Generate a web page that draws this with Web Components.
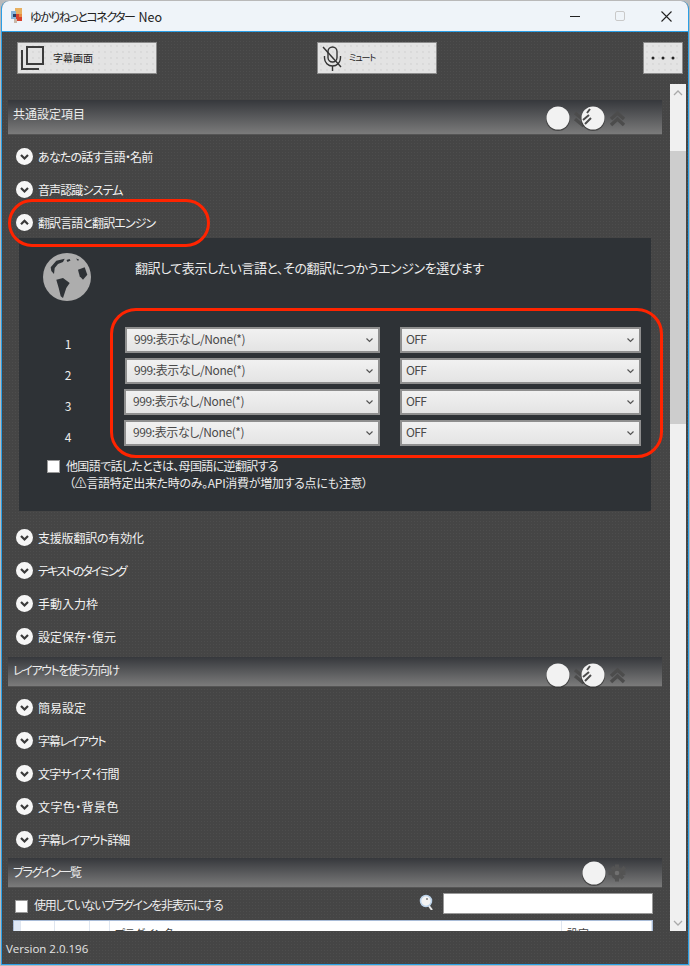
<!DOCTYPE html>
<html lang="ja">
<head>
<meta charset="utf-8">
<title>ゆかりねっとコネクター Neo</title>
<style>
  html, body { margin: 0; height: 100%; background: #b9b9b9; }
  body {
    font-family: "Noto Sans CJK JP", "Noto Sans", sans-serif;
    font-size: 12px;
    font-feature-settings: "palt";
    overflow: hidden;
  }
</style>
</head>
<body>
<app-window>
  <title-bar>ゆかりねっとコネクター <span style="letter-spacing:0;margin-left:3px;font-size:12.500px">Neo</span></title-bar>
  <tool-bar></tool-bar>
  <scroll-area>
    <section-header size="35" kind="double">共通設定項目</section-header>
    <expander-row style="margin-top:5px;letter-spacing:-.8px">あなたの話す言語・名前</expander-row>
    <expander-row style="letter-spacing:-.9px">音声認識システム</expander-row>
    <expander-row open style="letter-spacing:-.9px">翻訳言語と翻訳エンジン</expander-row>
    <translate-panel></translate-panel>
    <expander-row style="letter-spacing:-.2px">支援版翻訳の有効化</expander-row>
    <expander-row style="letter-spacing:-1.8px">テキストのタイミング</expander-row>
    <expander-row>手動入力枠</expander-row>
    <expander-row>設定保存・復元</expander-row>
    <section-header size="30" kind="double" style="margin-top:4px;letter-spacing:-1.4px;--text-top:-1px">レイアウトを使う方向け</section-header>
    <expander-row style="margin-top:4px">簡易設定</expander-row>
    <expander-row style="letter-spacing:-1.3px">字幕レイアウト</expander-row>
    <expander-row style="letter-spacing:-.75px">文字サイズ・行間</expander-row>
    <expander-row style="letter-spacing:.4px">文字色・背景色</expander-row>
    <expander-row style="letter-spacing:-1px">字幕レイアウト詳細</expander-row>
    <section-header size="30" kind="gear" style="margin-top:2px;letter-spacing:-1.4px">プラグイン一覧</section-header>
    <plugin-bar></plugin-bar>
  </scroll-area>
  <version-bar>Version 2.0.196</version-bar>
</app-window>
<red-marks></red-marks>

<script>
class AppWindow extends HTMLElement {
  constructor() {
    super();
    this.attachShadow({ mode: 'open' }).innerHTML = `
      <style>
        :host {
          display: flex;
          flex-direction: column;
          box-sizing: border-box;
          margin: 1px;
          height: 964px;
          border-radius: 8px 8px 0 0;
          overflow: hidden;
          border: solid #2a9fe6;
          border-width: 0 1px 1px 1px;
          background: radial-gradient(circle, #4d4d4d 0.7px, transparent 1px) 0 0 / 3px 3px, #454545;
        }
      </style>
      <slot></slot>`;
  }
}

class TitleBar extends HTMLElement {
  constructor() {
    super();
    this.attachShadow({ mode: 'open' }).innerHTML = `
      <style>
        :host {
          display: flex;
          align-items: center;
          flex: none;
          height: 30px;
          background: #eff4f9;
          border-bottom: 1px solid #2a9fe6;
          color: #222;
          font-size: 12px;
        }
        .logo { margin: 0 6px 0 9px; flex: none; }
        .text { flex: 1; padding-top: 1px; letter-spacing: -1.500px; }
        .ctl { height: 30px; display: flex; align-items: center; justify-content: center; }
        .ctl svg { display: block; }
      </style>
      <svg class="logo" width="13" height="16" viewBox="0 0 13 16">
        <rect x="4" y="0" width="7" height="6" fill="#e8b060"/>
        <rect x="0" y="3" width="5" height="8" fill="#86b4da"/>
        <rect x="2" y="6" width="3" height="3" fill="#2b3f66"/>
        <rect x="5" y="6" width="6" height="7" fill="#d8402c"/>
        <rect x="8" y="6" width="3" height="3" fill="#e88a40"/>
        <rect x="3" y="11" width="3" height="4" fill="#c9b8a8"/>
      </svg>
      <span class="text"><slot></slot></span>
      <div class="ctl" style="width:42px"><svg width="10" height="10"><path d="M0 5.500h10" stroke="#222" stroke-width="1"/></svg></div>
      <div class="ctl" style="width:48px"><svg width="10" height="10"><rect x=".5" y=".5" width="9" height="9" rx="1.500" fill="none" stroke="#c9c9c9"/></svg></div>
      <div class="ctl" style="width:44px"><svg width="11" height="11"><path d="M.5 .5l10 10M10.500 .5l-10 10" stroke="#222" stroke-width="1.100"/></svg></div>`;
  }
}

class ToolButton extends HTMLElement {
  constructor() {
    super();
    this.attachShadow({ mode: 'open' }).innerHTML = `
      <style>
        :host {
          display: flex;
          align-items: center;
          box-sizing: border-box;
          height: 32px;
          border: 1px solid #8b8b8b;
          background: radial-gradient(circle, #d6d6d6 0.6px, transparent 1px) 0 0 / 6px 6px, #e3e3e3;
          color: #222;
        }
      </style>
      <slot></slot>`;
  }
}

class ToolBar extends HTMLElement {
  constructor() {
    super();
    this.attachShadow({ mode: 'open' }).innerHTML = `
      <style>
        :host {
          display: flex;
          flex: none;
          box-sizing: border-box;
          height: 52px;
          padding: 10px 5px 0 15px;
        }
        .screen { width: 140px; }
        .mute { width: 120px; margin-left: 160px; }
        .more { width: 40px; margin-left: auto; justify-content: center; }
        .label { font-size: 10px; padding-bottom: 2px; }
        svg { flex: none; display: block; }
      </style>
      <tool-button class="screen">
        <svg width="35" height="30" viewBox="0 0 35 30">
          <path d="M9 4h16v17h-16z" fill="none" stroke="#3c3c3c" stroke-width="2"/>
          <path d="M4 7v19h17" fill="none" stroke="#3c3c3c" stroke-width="2"/>
        </svg>
        <span class="label">字幕画面</span>
      </tool-button>
      <tool-button class="mute">
        <svg width="31" height="30" viewBox="0 0 31 30">
          <rect x="10" y="4" width="9" height="15" rx="4.500" fill="none" stroke="#333" stroke-width="1.400"/>
          <path d="M6.500 13v2a8 8 0 0 0 16 0v-2M14.500 23v5" fill="none" stroke="#333" stroke-width="1.400"/>
          <path d="M5 4l18 20" stroke="#333" stroke-width="1.400"/>
        </svg>
        <span class="label" style="font-size:9px;letter-spacing:-1.200px">ミュート</span>
      </tool-button>
      <tool-button class="more">
        <svg width="26" height="6"><circle cx="3" cy="3" r="1.500" fill="#222"/><circle cx="13" cy="3" r="1.500" fill="#222"/><circle cx="23" cy="3" r="1.500" fill="#222"/></svg>
      </tool-button>`;
  }
}

class ScrollArea extends HTMLElement {
  constructor() {
    super();
    this.attachShadow({ mode: 'open' }).innerHTML = `
      <style>
        :host {
          display: flex;
          flex: 1;
          min-height: 0;
          overflow: hidden;
          padding-right: 2px;
        }
        .content {
          flex: 1;
          min-width: 0;
          overflow: hidden;
          padding: 16px 8px 0 6px;
          display: flex;
          flex-direction: column;
        }
        .bar {
          width: 16px;
          flex: none;
          display: flex;
          flex-direction: column;
          background: #f0f0f0;
        }
        .arrow { height: 17px; flex: none; display: flex; align-items: center; justify-content: center; }
        .thumb-top { height: 50px; flex: none; }
        .thumb { height: 273px; flex: none; background: #cdcdcd; }
        .rest { flex: 1; }
      </style>
      <div class="content"><slot></slot></div>
      <div class="bar">
        <div class="arrow"><svg width="10" height="6"><path d="M1 5l4-4 4 4" fill="none" stroke="#aaa" stroke-width="1.300"/></svg></div>
        <div class="thumb-top"></div>
        <div class="thumb"></div>
        <div class="rest"></div>
        <div class="arrow"><svg width="10" height="6"><path d="M1 1l4 4 4-4" fill="none" stroke="#aaa" stroke-width="1.300"/></svg></div>
      </div>`;
  }
}

class SectionHeader extends HTMLElement {
  constructor() {
    super();
    const size = this.getAttribute('size') || '30';
    const gear = this.getAttribute('kind') === 'gear';
    const icons = gear ? `
      <svg width="56" height="30" viewBox="0 0 56 30">
        <circle cx="16" cy="16" r="12" fill="#333" opacity=".7"/>
        <circle cx="16" cy="15" r="11.500" fill="#f2f2f2"/>
        <g fill="#545454">
          <circle cx="39" cy="15" r="6"/>
          <path d="M37 6.500h4v17h-4zM30.500 13h17v4h-17z"/>
          <path d="M32.500 10.500l2.800-2.800 11.200 11.200-2.800 2.800zM45.500 7.700l2.800 2.800-11.200 11.200-2.800-2.800z"/>
        </g>
        <circle cx="39" cy="15" r="2.300" fill="#707070"/>
      </svg>` : `
      <svg width="90" height="30" viewBox="0 0 90 30">
        <circle cx="12" cy="16" r="12" fill="#333" opacity=".7"/>
        <circle cx="12" cy="15" r="11.500" fill="#f2f2f2"/>
        <path d="M29 10l7.500 6 7.500-6M29 16l7.500 6 7.500-6" fill="none" stroke="#4c4c4c" stroke-width="3.400"/>
        <circle cx="47" cy="16" r="12" fill="#333" opacity=".7"/>
        <circle cx="47" cy="15" r="11.500" fill="#f2f2f2"/>
        <path d="M37 17l6-5M39 21l6-6M41 10l3-4" fill="none" stroke="#4c4c4c" stroke-width="2"/>
        <path d="M65 16l6.500-6 6.500 6M65 22l6.500-6 6.500 6" fill="none" stroke="#4c4c4c" stroke-width="3.400"/>
      </svg>`;
    this.attachShadow({ mode: 'open' }).innerHTML = `
      <style>
        :host {
          display: flex;
          flex: none;
          align-items: flex-start;
          height: ${size}px;
          box-sizing: border-box;
          padding: 4px 0 0 5px;
          background: linear-gradient(#36383c, #7b7b7b);
          border-bottom: 1px solid #555;
          color: #ececec;
          font-size: 12px;
        }
        .text { flex: 1; line-height: 20px; margin-top: var(--text-top, 0); }
        svg { flex: none; display: block; margin: ${gear ? -4 : -1}px ${gear ? 28 : 26}px 0 0; overflow: visible; }
      </style>
      <span class="text"><slot></slot></span>
      ${icons}`;
  }
}

class ExpanderRow extends HTMLElement {
  constructor() {
    super();
    const open = this.hasAttribute('open');
    this.attachShadow({ mode: 'open' }).innerHTML = `
      <style>
        :host {
          display: flex;
          flex: none;
          align-items: center;
          height: 33px;
          padding-left: 8px;
          gap: 5px;
          color: #f2f2f2;
          font-size: 12px;
        }
        svg { flex: none; display: block; }
      </style>
      <svg width="17" height="17" viewBox="0 0 17 17">
        <circle cx="8.500" cy="8.500" r="8.500" fill="#f6f6f6"/>
        <path d="${open ? 'M5 10.300l3.500-3.500 3.500 3.500' : 'M5 7l3.500 3.500 3.500-3.500'}" fill="none" stroke="#3a3a3a" stroke-width="2.200"/>
      </svg>
      <slot></slot>`;
  }
}

class LangSelect extends HTMLElement {
  constructor() {
    super();
    this.attachShadow({ mode: 'open' }).innerHTML = `
      <style>
        :host {
          display: flex;
          align-items: center;
          box-sizing: border-box;
          height: 26px;
          padding: 0 5px 3px 7px;
          border: 2px solid #8f8f8f;
          background: linear-gradient(#f1f1f1, #e4e4e4);
          color: #4a4a4a;
          font-size: 12px;
        }
        .v { flex: 1; }
        svg { flex: none; display: block; margin-top: 3px; }
      </style>
      <span class="v"><slot></slot></span>
      <svg width="7" height="5"><path d="M.5 .5l3 3 3-3" fill="none" stroke="#555" stroke-width="1.200"/></svg>`;
  }
}

class CheckText extends HTMLElement {
  constructor() {
    super();
    this.attachShadow({ mode: 'open' }).innerHTML = `
      <style>
        :host { display: flex; align-items: flex-start; gap: 6px; color: #ececec; font-size: 12px; line-height: 17px; }
        .box { width: 13px; height: 13px; flex: none; background: #fff; border: 1px solid #999; box-sizing: border-box; margin-top: var(--box-top, 1px); }
      </style>
      <div class="box"></div>
      <div><slot></slot></div>`;
  }
}

class TranslatePanel extends HTMLElement {
  constructor() {
    super();
    const rows = [1, 2, 3, 4].map(n => `
      <div class="num">${n}</div>
      <lang-select class="lang ${n > 2 ? 'shift' : ''}">999:表示なし/None(*)</lang-select>
      <lang-select class="off">OFF</lang-select>`).join('');
    this.attachShadow({ mode: 'open' }).innerHTML = `
      <style>
        :host {
          display: block;
          flex: none;
          box-sizing: border-box;
          margin: -1px 11px 10px 11px;
          height: 273px;
          background: #2e3236;
          color: #ececec;
          padding-top: 15px;
        }
        .head { display: flex; height: 74px; }
        .globe { margin-left: 24px; flex: none; display: block; }
        .title { margin-left: 44px; font-size: 13px; line-height: 20px; margin-top: 5px; letter-spacing: -.43px; }
        .grid {
          display: grid;
          grid-template-columns: 106px 255px 20px 241px;
          row-gap: 5px;
          grid-auto-rows: 26px;
        }
        .lang { letter-spacing: -.4px; }
        .off { grid-column: 4; padding-left: 4px; letter-spacing: -.6px; }
        .num { text-align: center; padding-right: 8px; font-size: 12px; line-height: 34px; }
        .shift { margin-left: -1px; }
        check-text { margin: 11px 0 0 28px; --box-top: 3px; }
        .one { letter-spacing: -.65px; }
        .sub { display: block; padding-left: 3px; letter-spacing: -.3px; }
      </style>
      <div class="head">
        <svg class="globe" width="48" height="48" viewBox="0 0 48 48">
          <circle cx="24" cy="24" r="24" fill="#adadad"/>
          <g fill="#2e3236">
            <path d="M7.700 14.300L13.300 7.700 21.700 5.700 20 9 15 11 11.700 15 11 21 8.300 18z"/>
            <path d="M13.300 26.700L20 25 26.700 30 23.300 35 20 45 17.700 43.300 15.700 35z"/>
            <path d="M35 16.700L41.700 14.300 44.300 21.700 40 26.700 36.700 23.300z"/>
            <path d="M23.500 7l3-1 1 1.500-3 1.500zM33 5.500l3 1-1 1.500z"/>
          </g>
        </svg>
        <div class="title">翻訳して表示したい言語と、その翻訳につかうエンジンを選びます</div>
      </div>
      <div class="grid">${rows}</div>
      <check-text><span class="one">他国語で話したときは、母国語に逆翻訳する</span><span class="sub">（⚠言語特定出来た時のみ。API消費が増加する点にも注意）</span></check-text>`;
  }
}

class PluginBar extends HTMLElement {
  constructor() {
    super();
    this.attachShadow({ mode: 'open' }).innerHTML = `
      <style>
        :host { display: block; flex: none; color: #f0f0f0; font-size: 12px; }
        .top { display: flex; align-items: center; height: 32px; padding: 1px 9px 0 7px; box-sizing: border-box; }
        check-text { flex: 1; letter-spacing: -1.300px; --box-top: 4px; }
        .search { flex: none; display: block; margin-right: 10px; margin-top: -5px; }
        .input { width: 210px; height: 21px; box-sizing: border-box; background: #fff; border: 1px solid #999; margin-top: -3px; }
        .table {
          display: grid;
          grid-template-columns: 7px 34px 35px 20px 1fr 90px;
          height: 20px;
          margin: 0 9px 0 5px;
          background: #fff;
          border: solid #a9bcd8;
          border-width: 1px 1px 0 1px;
          color: #444;
          font-size: 11px;
          line-height: 24px;
          overflow: hidden;
        }
        .table div { border-right: 1px solid #dfe6f0; padding-left: 5px; }
        .table div:first-child { background: #dfe8f5; padding: 0; }
      </style>
      <div class="top">
        <check-text>使用していないプラグインを非表示にする</check-text>
        <svg class="search" width="14" height="16" viewBox="0 0 14 16">
          <circle cx="7" cy="7" r="5.500" fill="#f4f4f4" stroke="#bcd3ea" stroke-width="1.500"/>
          <path d="M10 12l3 4" stroke="#e8e8e8" stroke-width="2"/>
          <path d="M8 4v2" stroke="#444" stroke-width="1"/>
        </svg>
        <div class="input"></div>
      </div>
      <div class="table"><div></div><div></div><div></div><div></div><div>プラグイン名</div><div>設定</div></div>`;
  }
}

class VersionBar extends HTMLElement {
  constructor() {
    super();
    this.attachShadow({ mode: 'open' }).innerHTML = `
      <style>
        :host {
          display: flex;
          align-items: center;
          flex: none;
          height: 33px;
          padding: 2px 0 0 4px;
          box-sizing: border-box;
          color: #e4e4e4;
          font-family: "Open Sans", "Noto Sans", sans-serif;
          font-size: 11.500px;
          background: radial-gradient(circle, #4d4d4d 0.7px, transparent 1px) 0 0 / 3px 3px, #454545;
        }
      </style>
      <slot></slot>`;
  }
}

// the red hand drawn marks sit over the finished window
class RedMarks extends HTMLElement {
  constructor() {
    super();
    this.attachShadow({ mode: 'open' }).innerHTML = `
      <style>
        :host { display: block; position: absolute; inset: 0; pointer-events: none; }
        div { position: absolute; box-sizing: border-box; border: 3.500px solid #ff2400; }
        .a { left: 8px; top: 199px; width: 202px; height: 48px; border-radius: 24px; }
        .b { left: 110px; top: 308px; width: 553px; height: 150px; border-radius: 26px; }
      </style>
      <div class="a"></div>
      <div class="b"></div>`;
  }
}

customElements.define('app-window', AppWindow);
customElements.define('title-bar', TitleBar);
customElements.define('tool-button', ToolButton);
customElements.define('tool-bar', ToolBar);
customElements.define('scroll-area', ScrollArea);
customElements.define('section-header', SectionHeader);
customElements.define('expander-row', ExpanderRow);
customElements.define('lang-select', LangSelect);
customElements.define('check-text', CheckText);
customElements.define('translate-panel', TranslatePanel);
customElements.define('plugin-bar', PluginBar);
customElements.define('version-bar', VersionBar);
customElements.define('red-marks', RedMarks);
</script>
</body>
</html>
